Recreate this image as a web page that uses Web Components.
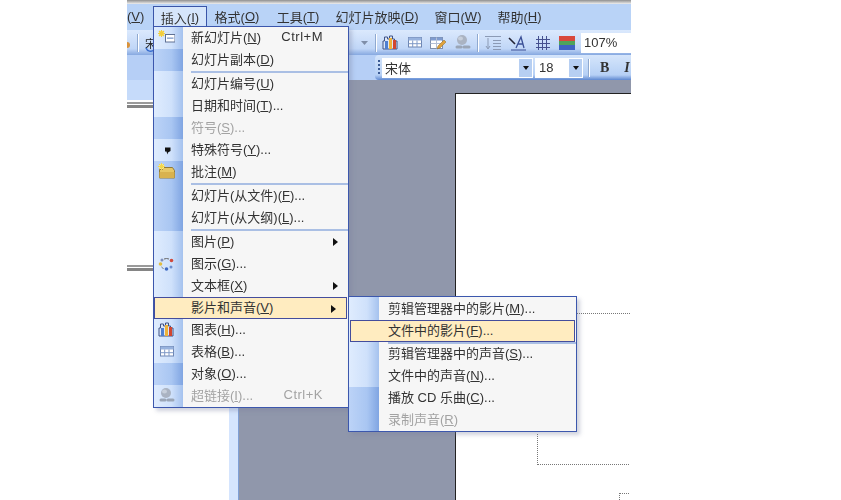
<!DOCTYPE html>
<html>
<head>
<meta charset="utf-8">
<style>
html, body { margin: 0; background: #fff; }
body { width: 841px; height: 500px; overflow: hidden; position: relative; font-family: "Liberation Sans", "Noto Sans CJK SC", sans-serif; }
body > * { filter: blur(.4px); }
</style>
</head>
<body>
<ppt-window>
  <ppt-menubar slot="menubar"></ppt-menubar>
  <ppt-toolbars slot="toolbars"></ppt-toolbars>
</ppt-window>

<ppt-menu id="insert" style="left:153px;top:26px;width:196px;--strip:29px;--text:37px;--seph:2px">
  <ppt-item icon="newslide" shortcut="Ctrl+M">新幻灯片(<u>N</u>)</ppt-item>
  <ppt-item dark>幻灯片副本(<u>D</u>)</ppt-item>
  <ppt-sep></ppt-sep>
  <ppt-item>幻灯片编号(<u>U</u>)</ppt-item>
  <ppt-item>日期和时间(<u>T</u>)...</ppt-item>
  <ppt-item dark disabled>符号(<u>S</u>)...</ppt-item>
  <ppt-item icon="quote">特殊符号(<u>Y</u>)...</ppt-item>
  <ppt-item dark icon="note">批注(<u>M</u>)</ppt-item>
  <ppt-sep dark></ppt-sep>
  <ppt-item dark>幻灯片(从文件)(<u>F</u>)...</ppt-item>
  <ppt-item dark>幻灯片(从大纲)(<u>L</u>)...</ppt-item>
  <ppt-sep dark></ppt-sep>
  <ppt-item arrow>图片(<u>P</u>)</ppt-item>
  <ppt-item icon="diagram">图示(<u>G</u>)...</ppt-item>
  <ppt-item arrow>文本框(<u>X</u>)</ppt-item>
  <ppt-item arrow active>影片和声音(<u>V</u>)</ppt-item>
  <ppt-item icon="chart">图表(<u>H</u>)...</ppt-item>
  <ppt-item icon="table">表格(<u>B</u>)...</ppt-item>
  <ppt-item dark>对象(<u>O</u>)...</ppt-item>
  <ppt-item icon="link" shortcut="Ctrl+K" disabled>超链接(<u>I</u>)...</ppt-item>
</ppt-menu>

<ppt-menu id="movies" style="left:348px;top:296px;width:229px;padding-top:1px;--strip:30px;--text:39px;--seph:1px;--inset:1px">
  <ppt-item>剪辑管理器中的影片(<u>M</u>)...</ppt-item>
  <ppt-item active>文件中的影片(<u>F</u>)...</ppt-item>
  <ppt-sep></ppt-sep>
  <ppt-item>剪辑管理器中的声音(<u>S</u>)...</ppt-item>
  <ppt-item>文件中的声音(<u>N</u>)...</ppt-item>
  <ppt-item dark>播放 CD 乐曲(<u>C</u>)...</ppt-item>
  <ppt-item dark disabled>录制声音(<u>R</u>)</ppt-item>
</ppt-menu>

<script>
const ICONS = {
    newslide: `<rect x="7.500" y="5.500" width="9.500" height="7.500" fill="#fff" stroke="#5f7194"/><rect x="9" y="8.500" width="6.500" height="1.300" fill="#7f9bcb"/><rect x="1" y="2" width="5" height="5" fill="#f7e27a"/><path d="M0 4.500h7M3.500 1v7M1 2l5 5M6 2L1 7" stroke="#f2cd3f" stroke-width="1.100"/>`,
    quote: `<path d="M7 6.500h5.500v3.500l-2.500 1.500-.6 2-.9-3H7z" fill="#111"/>`,
    note: `<path d="M1.500 6.500h3l1-2h9l2 3v7.500h-15z" fill="#e7c765" stroke="#8f7a3e"/><path d="M1.500 9h15v6h-15z" fill="#d9b24f"/><rect x="1" y="1" width="5" height="5" fill="#f7e88e"/><path d="M0 3.500h7M3.500 0v7M1 1l5 5M6 1L1 6" stroke="#f2d64f"/>`,
    diagram: `<circle cx="2.500" cy="9" r="1.800" fill="#e2bd3f"/><circle cx="4" cy="5" r="1.500" fill="#7f8fb8"/><circle cx="13.500" cy="5.500" r="1.800" fill="#d04a3c"/><circle cx="13" cy="12" r="1.500" fill="#6d8ecf"/><circle cx="8.500" cy="14" r="1.800" fill="#3f6bc4"/><path d="M6 4a7 7 0 0 1 5 0M3.500 12a6 6 0 0 0 2 1.500" stroke="#666" fill="none"/>`,
    chart: `<path d="M1 15V7h1.500V3h3v2h2V2h3v3h2v2H15v8z" fill="#dce6f6" stroke="#3f5286"/><rect x="3" y="7" width="3" height="8" fill="#4f7fd0"/><rect x="7" y="4" width="3" height="11" fill="#eeb23a"/><rect x="11" y="6" width="3" height="9" fill="#d2452f"/>`,
    table: `<rect x="2.500" y="3.500" width="13" height="9.500" fill="#fff" stroke="#6e86b3"/><rect x="2.500" y="3.500" width="13" height="3" fill="#97b2de"/><path d="M6.700 6.500V13M11 6.500V13M2.500 9.700h13" stroke="#7f99c7"/>`,
    link: `<circle cx="8" cy="6" r="5" fill="#aab3c2"/><ellipse cx="6.500" cy="4.500" rx="2.500" ry="2" fill="#c7cfdb"/><path d="M3 13h4M10 13h5" stroke="#9aa5b6" stroke-width="3" stroke-linecap="round"/>`
};

class PptWindow extends HTMLElement {
    constructor() {
        super();
        this.attachShadow({ mode: "open" });
        this.shadowRoot.innerHTML = `
            <style>
                :host { display: block; width: 504px; height: 500px; margin-left: 127px; overflow: hidden; }
                #top { height: 4px; background: linear-gradient(#8f8f8f, #c9c9c9 60%, #efefef); }
                #work { display: grid; grid-template-columns: 102px 10px 1fr; height: 420px; }
                #outline { position: relative; background: #fff; }
                #tabs { height: 20px; background: #c6dbfa; }
                .rule { position: absolute; left: 0; width: 26px; height: 6px; box-sizing: border-box; border-top: 2px solid #9a9a9a; border-bottom: 3px solid #858585; }
                #strip { background: #d5e5fe; border-right: 1px solid #7f9fd6; box-sizing: border-box; }
                #gray { background: #9097ab; padding: 13px 0 0 216px; overflow: hidden; }
                #paper { position: relative; height: 407px; background: #fff; border-top: 1px solid #222; border-left: 1px solid #222; }
                .dots { position: absolute; border: 0 dotted #777; }
            </style>
            <div id="top"></div>
            <slot name="menubar"></slot>
            <slot name="toolbars"></slot>
            <div id="work">
                <div id="outline">
                    <div id="tabs"></div>
                    <div class="rule" style="top:22px"></div>
                    <div class="rule" style="top:185px"></div>
                </div>
                <div id="strip"></div>
                <div id="gray"><div id="paper">
                    <div class="dots" style="left:121px;top:219px;width:55px;border-top-width:1px"></div>
                    <div class="dots" style="left:81px;top:340px;width:91px;height:30px;border-left-width:1px;border-bottom-width:1px"></div>
                    <div class="dots" style="left:163px;top:399px;width:9px;height:6px;border-left-width:1px;border-top-width:1px"></div>
                </div></div>
            </div>
        `;
    }
}

class PptMenubar extends HTMLElement {
    constructor() {
        super();
        this.attachShadow({ mode: "open" });
        const names = [["", "V", 26, "first"], ["插入", "I", 54, "open"], ["格式", "O", 60], ["工具", "T", 62], ["幻灯片放映", "D", 96], ["窗口", "W", 66], ["帮助", "H", 57]];
        const items = names.map(([t, k, w, cls]) => `<span class="m ${cls || ""}" style="width:${w}px">${t}(<u>${k}</u>)</span>`).join("");
        this.shadowRoot.innerHTML = `
            <style>
                :host { display: block; height: 26px; background: #b9d3f7; overflow: hidden; font-size: 13px; color: #333; }
                #row { display: flex; height: 26px; white-space: nowrap; }
                .m { display: flex; align-items: center; justify-content: center; box-sizing: border-box; height: 22px; margin-top: 2px; padding-bottom: 2px; flex: none; }
                .first { justify-content: flex-start; }
                .open { background: #d5e5fb; border: 1px solid #3a55a8; border-bottom: 0; height: 24px; padding-bottom: 3px; }
            </style>
            <div id="row">${items}</div>
        `;
    }
}

class PptToolbars extends HTMLElement {
    constructor() {
        super();
        this.attachShadow({ mode: "open" });
        this.shadowRoot.innerHTML = `
            <style>
                :host { display: block; height: 50px; font-size: 13px; color: #333; }
                .bar { display: flex; align-items: center; box-sizing: border-box; height: 25px; }
                #one { background: linear-gradient(#dbe9fd, #c0d6f7 75%, #86a8e0); }
                #two { background: #b6cff6; padding-left: 248px; }
                #tail { display: flex; align-items: center; height: 25px; flex: 1; background: linear-gradient(#d5e5fb, #b6d0f5 80%, #5f88d0); border-radius: 4px 0 0 4px; padding-left: 3px; }
                .grip { width: 2px; height: 16px; margin-right: 2px; background: repeating-linear-gradient(#3b5a94 0 2px, transparent 2px 4px); flex: none; }
                .field { display: flex; align-items: center; justify-content: space-between; height: 20px; background: #fff; box-sizing: border-box; padding-left: 3px; flex: none; }
                .drop { display: flex; align-items: center; justify-content: center; width: 15px; height: 20px; background: #b7cff2; border: 1px solid #fff; box-sizing: border-box; }
                .drop i { border: 3px solid transparent; border-top: 4px solid #111; border-bottom: 0; }
                .sep { width: 1px; height: 18px; background: #8fa9d0; border-right: 1px solid #fff; flex: none; }
                b { font-family: "Liberation Serif", serif; font-size: 14px; }
                svg { display: block; flex: none; }
            </style>
            <div id="one" class="bar">
                <svg width="4" height="6" viewBox="0 0 4 6" style="margin-top:5px"><circle cx="0" cy="3" r="3" fill="#d9923a"/></svg>
                <span class="sep" style="margin-left:6px"></span>
                <span style="margin-left:6px;font-size:11px;color:#222;font-family:'Noto Sans CJK SC',sans-serif">宋</span>
                <svg width="11" height="6" viewBox="0 0 11 6" style="margin-left:-11px;margin-top:14px"><path d="M1 1a5 5 0 0 0 8 2" stroke="#3a6fd0" stroke-width="1.500" fill="none"/></svg>
                <span style="flex:1"></span>
                <svg width="7" height="4" viewBox="0 0 7 4" style="margin-right:7px"><path d="M0 0h7L3.500 4z" fill="#7f8ea8"/></svg>
                <span class="sep"></span>
                <svg style="margin-left:5px" width="17" height="17" viewBox="0 0 17 17">${ICONS.chart}</svg>
                <svg style="margin-left:7px" width="17" height="17" viewBox="0 0 17 17">${ICONS.table}</svg>
                <svg style="margin-left:6px" width="17" height="16" viewBox="0 0 17 16"><rect x="1.500" y="2.500" width="12" height="11" fill="#fff" stroke="#7f8fad"/><rect x="1.500" y="2.500" width="12" height="3" fill="#7f9bcf"/><path d="M7.500 2.500v11M1.500 8.500h12" stroke="#b4c0d6"/><path d="M8 14l1-3 6-6 2 2-6 6z" fill="#e0a23c" stroke="#8f6a2a" stroke-width=".5"/></svg>
                <svg style="margin-left:8px" width="17" height="17" viewBox="0 0 17 17">${ICONS.link}</svg>
                <span class="sep" style="margin-left:6px"></span>
                <svg style="margin-left:5px" width="18" height="16" viewBox="0 0 18 16"><path d="M4 3v10M2 11l2 3 2-3" stroke="#8b9ab5" fill="none"/><path d="M1 1.500h16M9 5.500h8M9 8.500h8M9 11.500h8M9 14.500h8" stroke="#8b9ab5"/></svg>
                <svg style="margin-left:6px" width="19" height="16" viewBox="0 0 19 16"><path d="M1 3l6 6" stroke="#223" stroke-width="1.600"/><path d="M8 13L13 2l3 11M10 9h5" stroke="#3a4f96" fill="none" stroke-width="1.300"/><path d="M3 15h15" stroke="#3a4f96"/></svg>
                <svg style="margin-left:8px" width="16" height="16" viewBox="0 0 16 16"><path d="M3.500 1v14M7.500 1v14M11.500 1v14M1 4.500h14M1 8.500h14M1 12.500h14" stroke="#44508f"/></svg>
                <svg style="margin-left:8px" width="16" height="14" viewBox="0 0 16 14"><rect width="16" height="5" fill="#d8483c"/><rect y="5" width="16" height="4" fill="#4fa35b"/><rect y="9" width="16" height="5" fill="#3f62c2"/></svg>
                <div class="field" style="width:50px;margin-left:6px">107%</div>
            </div>
            <div id="two" class="bar">
                <div id="tail">
                    <span class="grip"></span>
                    <div class="field" style="width:151px"><span style="font-family:'Noto Sans CJK SC',sans-serif">宋体</span><span class="drop"><i></i></span></div>
                    <div class="field" style="width:48px;margin-left:2px;padding-left:4px">18<span class="drop"><i></i></span></div>
                    <span class="sep" style="margin:0 0 0 5px"></span>
                    <b style="margin-left:10px">B</b><b style="font-style:italic;margin-left:15px">I</b>
                </div>
            </div>
        `;
    }
}

class PptMenu extends HTMLElement {
    constructor() {
        super();
        this.attachShadow({ mode: "open" });
        this.shadowRoot.innerHTML = `
            <style>
                :host {
                    position: absolute; display: block; box-sizing: border-box;
                    border: 1px solid #3c57ad; background: #f6f6f6;
                    box-shadow: 3px 3px 4px rgba(120, 130, 160, .35);
                    font-size: 13px; color: #333;
                }
                #bg {
                    position: absolute; left: 0; top: 0; bottom: 0; width: var(--strip);
                    background: linear-gradient(90deg, #dfecfe, #cfe1fb 60%, #a5c2ee);
                }
            </style>
            <div id="bg"></div>
            <slot></slot>
        `;
    }
}

class PptItem extends HTMLElement {
    constructor() {
        super();
        this.attachShadow({ mode: "open" });
        const icon = this.getAttribute("icon");
        const shortcut = this.getAttribute("shortcut");
        const svg = icon ? `<svg width="17" height="17" viewBox="0 0 17 17" style="display:block">${ICONS[icon]}</svg>` : "";
        this.shadowRoot.innerHTML = `
            <style>
                :host { display: block; position: relative; height: 22px; }
                :host([disabled]) { color: #a3a3a3; }
                :host([dark]) #cell { background: linear-gradient(90deg, #bcd3f7, #a9c6f2 60%, #80a5e2); }
                #cell { position: absolute; left: 0; top: 0; bottom: 0; width: var(--strip); }
                #row {
                    position: relative; display: flex; align-items: center; height: 22px; box-sizing: border-box;
                    padding-left: var(--text); padding-bottom: 3px; white-space: nowrap;
                }
                :host([active]) #row {
                    background: #ffecc0; border: 1px solid #444d9c;
                    padding-left: calc(var(--text) - 1px - var(--inset, 0px)); padding-bottom: 3px;
                    margin-left: var(--inset, 0px); margin-right: 1px;
                }
                #icon { position: absolute; left: 4px; top: 2px; }
                #short { position: absolute; right: 25px; letter-spacing: .5px; }
                #arrow { position: absolute; right: 10px; top: 7px; border: 4px solid transparent; border-left: 5px solid #111; border-right: 0; }
            </style>
            <div id="cell"></div>
            <div id="row"><span id="icon">${svg}</span><span><slot></slot></span>
            ${shortcut ? `<span id="short">${shortcut}</span>` : ""}
            ${this.hasAttribute("arrow") ? `<span id="arrow"></span>` : ""}</div>
        `;
    }
}

class PptSep extends HTMLElement {
    constructor() {
        super();
        this.attachShadow({ mode: "open" });
        this.shadowRoot.innerHTML = `
            <style>
                :host { display: block; height: var(--seph); position: relative; }
                :host([dark]) #cell { background: linear-gradient(90deg, #bcd3f7, #a9c6f2 60%, #80a5e2); }
                #cell { position: absolute; left: 0; top: 0; bottom: 0; width: var(--strip); }
                #line { position: absolute; left: var(--text); right: 0; top: 0; height: 1.500px; background: #aabfe4; }
            </style>
            <div id="cell"></div>
            <div id="line"></div>
        `;
    }
}

customElements.define("ppt-window", PptWindow);
customElements.define("ppt-menubar", PptMenubar);
customElements.define("ppt-toolbars", PptToolbars);
customElements.define("ppt-menu", PptMenu);
customElements.define("ppt-item", PptItem);
customElements.define("ppt-sep", PptSep);
</script>
</body>
</html>
